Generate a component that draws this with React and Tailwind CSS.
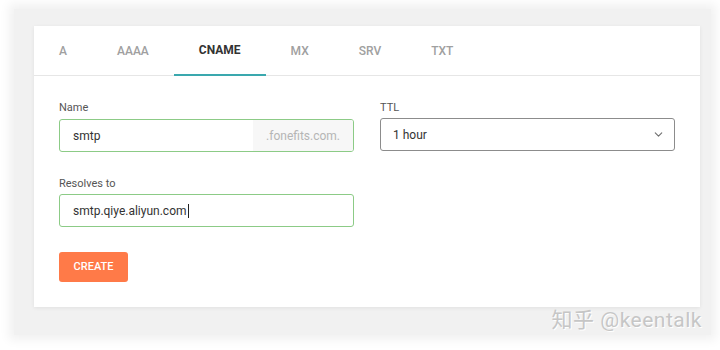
import { ChevronDown } from "lucide-react";

const tabs = ["A", "AAAA", "CNAME", "MX", "SRV", "TXT"];

const App = () => {
  const active = "CNAME";

  return (
    <div
      className="relative w-[720px] h-[350px] bg-white overflow-hidden pt-[9px] pl-[14px]"
      style={{ fontFamily: "Roboto, 'Noto Sans CJK SC', sans-serif" }}
    >
      <div className="w-[697px] h-[326px] bg-[#f1f1f1] shadow-[0_0_10px_5px_#f1f1f1] pt-[17px] pl-[20px]">
        <div className="w-[666px] h-[281px] bg-white shadow-[0_1px_4px_rgba(0,0,0,0.07)]">
          {/* tabs */}
          <div className="flex h-[50px] border-b border-[#e6e6e6]">
            {tabs.map((tab) => (
              <div
                key={tab}
                className={
                  tab === active
                    ? "flex items-center px-[25px] text-[12px] font-bold text-[#333] border-b-2 border-[#3aa8ae] -mb-px"
                    : "flex items-center px-[25px] text-[12px] font-medium text-[#a0a0a0]"
                }
              >
                {tab}
              </div>
            ))}
          </div>

          {/* form */}
          <div className="px-[25px] pt-[25px]">
            <div className="flex gap-x-[26px]">
              <div className="w-[295px]">
                <div className="text-[11px] leading-[14px] text-[#555] mb-[4px]">Name</div>
                <div className="flex items-center h-[33px] border border-[#8ccb86] rounded-[3px] pl-[13px]">
                  <span className="text-[12px] text-[#333]">smtp</span>
                  <span className="ml-auto self-stretch flex items-center px-[13px] rounded-r-[2px] bg-[#f7f7f7] text-[12px] text-[#b5b5b5]">
                    .fonefits.com.
                  </span>
                </div>
              </div>
              <div className="w-[295px]">
                <div className="text-[11px] leading-[14px] text-[#555] mb-[3px]">TTL</div>
                <div className="flex items-center justify-between h-[33px] border border-[#8c8c8c] rounded-[3px] pl-[12px] pr-[9px]">
                  <span className="text-[12px] text-[#333]">1 hour</span>
                  <ChevronDown size={13} strokeWidth={2} className="text-[#6f6f6f]" />
                </div>
              </div>
            </div>

            <div className="w-[295px] mt-[25px]">
              <div className="text-[11px] leading-[14px] text-[#555] mb-[3px]">Resolves to</div>
              <div className="flex items-center h-[33px] border border-[#8ccb86] rounded-[3px] pl-[13px]">
                <span className="text-[12px] text-[#333]">smtp.qiye.aliyun.com</span>
                <span className="w-px h-[14px] bg-[#222] ml-px" />
              </div>
            </div>

            <button className="mt-[25px] w-[69px] h-[30px] rounded-[3px] bg-[#ff7a48] text-white text-[11px] font-medium">
              CREATE
            </button>
          </div>
        </div>
      </div>

      {/* watermark */}
      <div className="absolute right-[18px] top-[305px] text-[21px] text-[#c6c6c6] [text-shadow:1px_1px_0_#ffffff] tracking-[0.5px]">
        知乎 @keentalk
      </div>
    </div>
  );
};

export default App;
